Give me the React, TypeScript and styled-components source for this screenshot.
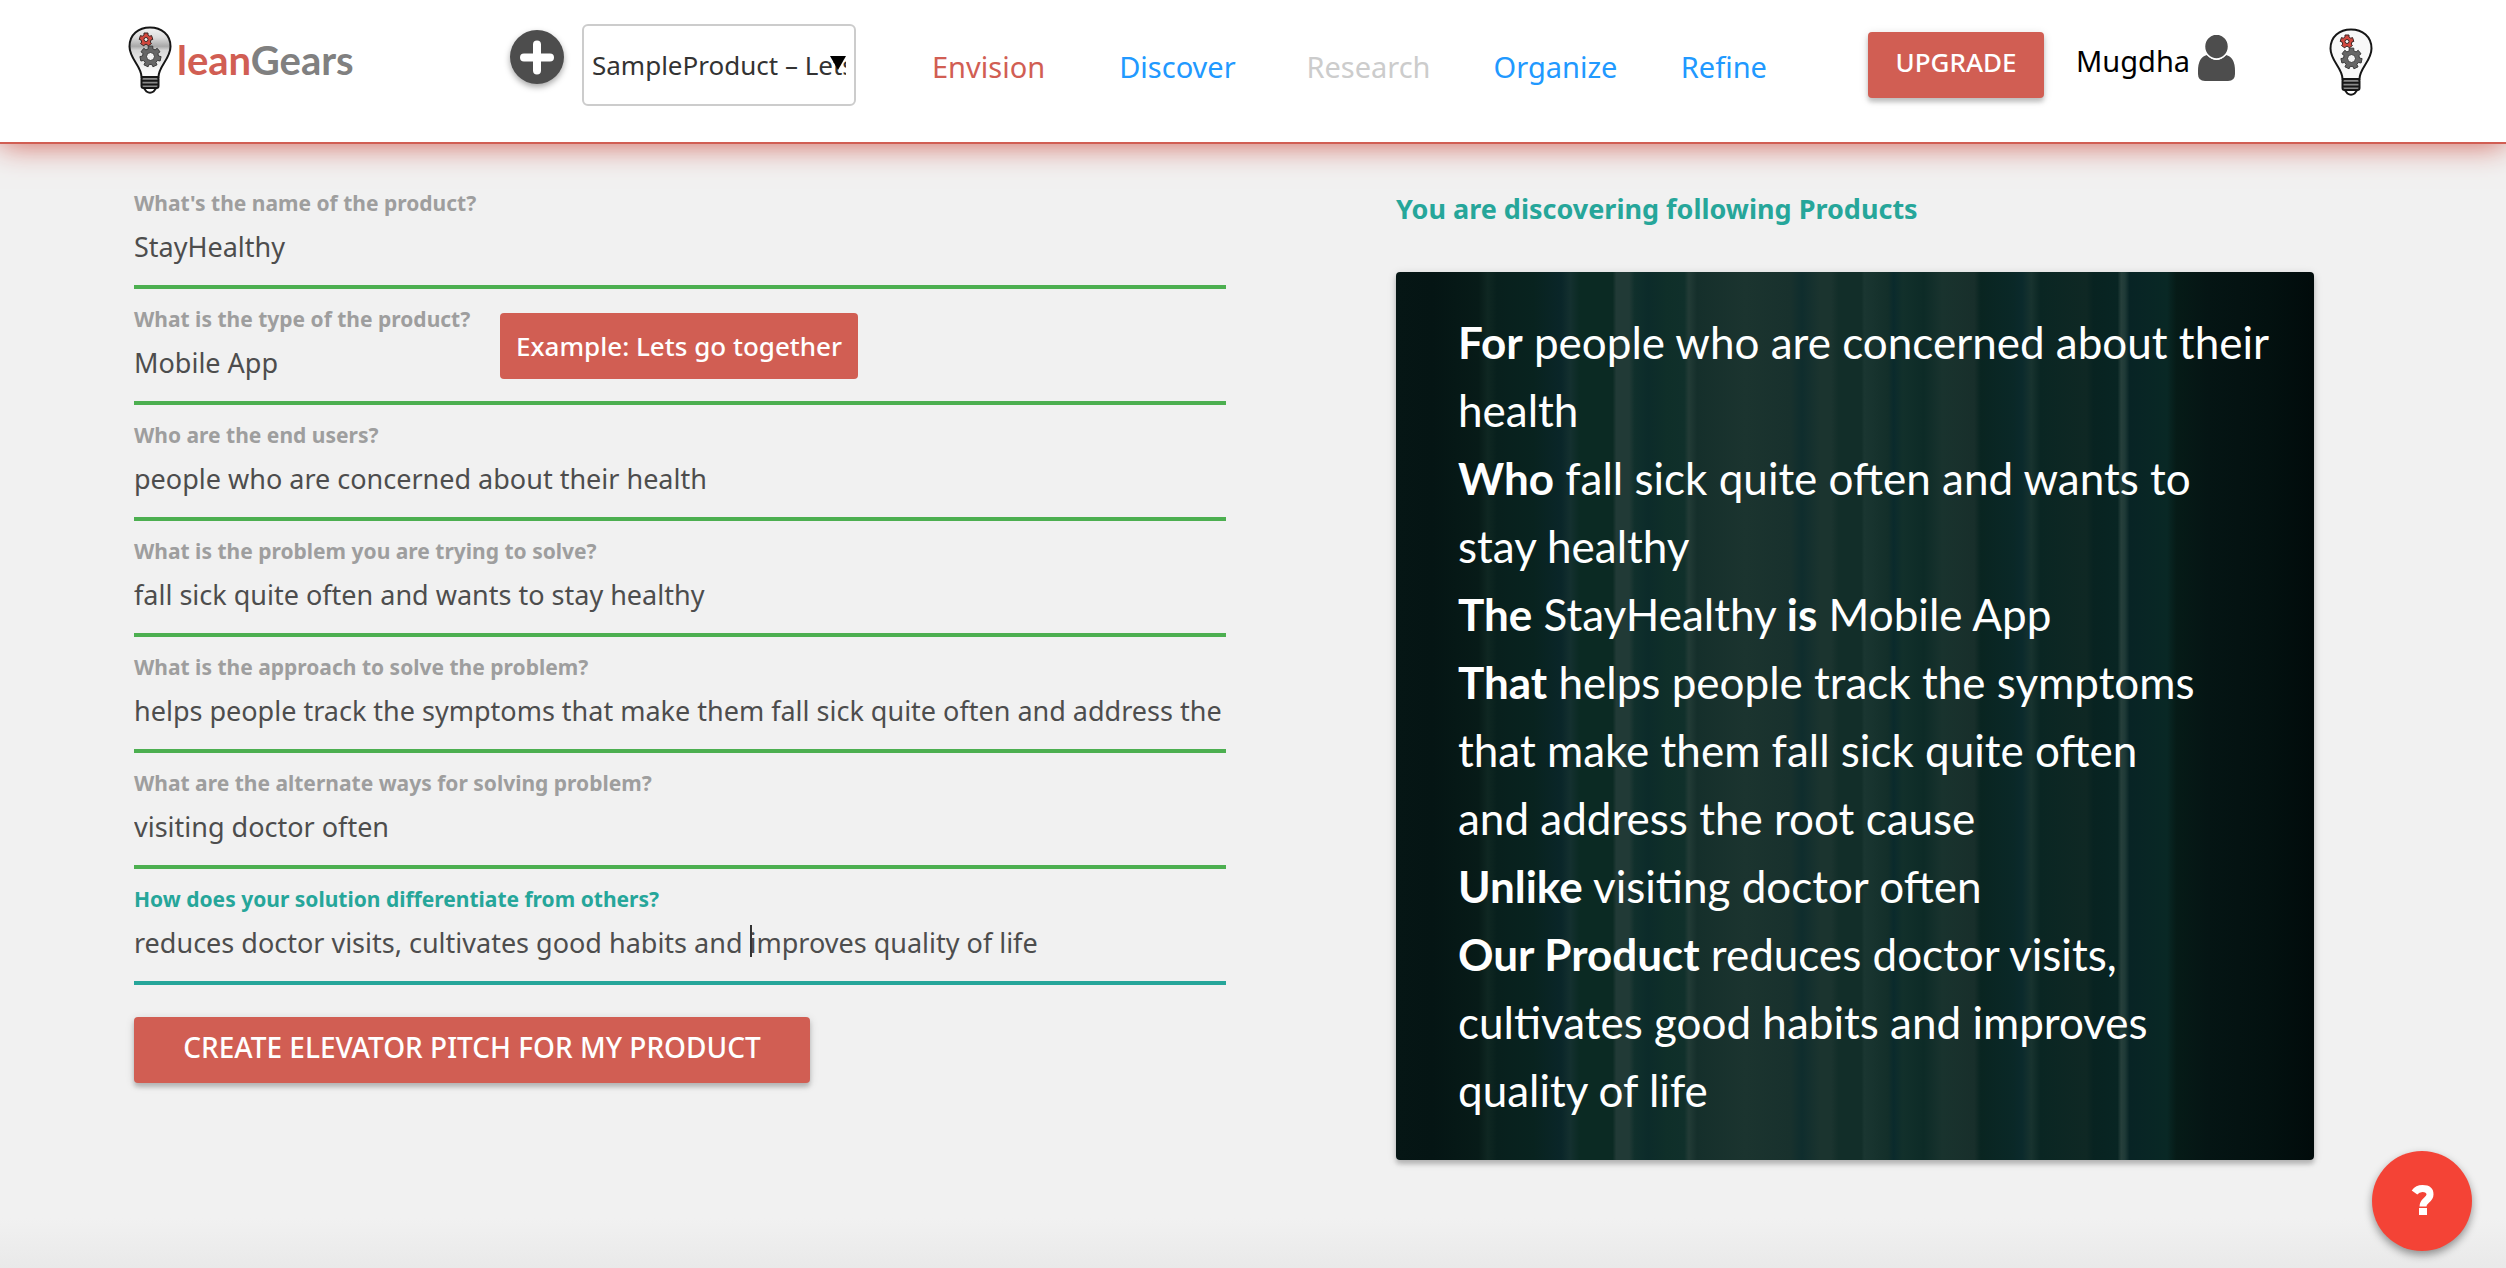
import React, { useLayoutEffect, useRef, useState } from 'react';
import styled, { createGlobalStyle, css } from 'styled-components';

const color = {
  page: '#f1f1f1',
  brand: '#d15e53',
  teal: '#26a69a',
  valid: '#4caf50',
  link: '#2199ff',
  muted: '#cccccc',
  label: '#9e9e9e',
  text: '#4d4d4d',
};

const raised = '0 4px 4px rgba(0, 0, 0, 0.18), 0 2px 10px rgba(0, 0, 0, 0.14)';
const sans = `'Noto Sans', 'Open Sans', sans-serif`;

const GlobalStyle = createGlobalStyle`
  *, *::before, *::after { box-sizing: border-box; }
  body {
    margin: 0;
    background: ${color.page};
    color: ${color.text};
    font-family: ${sans};
  }
  button, input, select { font-family: inherit; }
`;

const Page = styled.div`
  min-height: 100vh;
  background: linear-gradient(to top, #e9e9e9, ${color.page} 50px);
`;

const Header = styled.header`
  position: relative;
  display: grid;
  grid-template-columns: 382px 422px minmax(0, 1fr) 461px 44px;
  align-items: start;
  height: 144px;
  padding: 24px 133px 0 128px;
  background: #ffffff;
  border-bottom: 2px solid ${color.brand};
  box-shadow: 0 0 30px ${color.brand};
`;

const Brand = styled.a`
  display: flex;
  align-items: center;
  gap: 5px;
  padding-top: 2px;
  text-decoration: none;
`;

const Mascot = styled.div`
  padding-top: 4px;
`;

const Wordmark = styled.span<{ $accent?: boolean }>`
  font-family: Lato, sans-serif;
  font-size: 40px;
  font-weight: 700;
  line-height: 68px;
  color: ${(p) => (p.$accent ? color.brand : '#808080')};
`;

const Picker = styled.div`
  display: flex;
  gap: 18px;
`;

const AddButton = styled.button`
  width: 54px;
  height: 54px;
  margin-top: 6px;
  padding: 0;
  border: 0;
  border-radius: 50%;
  background: ${color.text};
  box-shadow: 0 3px 6px rgba(0, 0, 0, 0.35);
`;

const SelectBox = styled.div`
  position: relative;
  width: 274px;
`;

const ProductSelect = styled.select`
  appearance: none;
  display: block;
  width: 100%;
  height: 82px;
  padding: 0 8px;
  border: 2px solid ${color.muted};
  border-radius: 6px;
  background: #ffffff;
  color: #333333;
  font-size: 26px;
`;

const SelectArrow = styled.svg`
  position: absolute;
  top: 32px;
  right: 10px;
  pointer-events: none;
`;

const Nav = styled.nav`
  display: grid;
  grid-template-columns: repeat(5, 1fr);
  padding-top: 23px;
`;

const NavLink = styled.a<{ $tone: 'brand' | 'link' | 'muted' }>`
  color: ${(p) => color[p.$tone]};
  font-size: 29px;
  line-height: 40px;
  text-decoration: none;
`;

const Account = styled.div`
  display: flex;
  align-items: start;
  padding-top: 8px;
`;

const RaisedButton = styled.button<{ $wide?: boolean }>`
  height: 66px;
  min-width: ${(p) => (p.$wide ? 676 : 176)}px;
  padding: 0 24px 6px;
  border: 0;
  border-radius: 4px;
  background: ${color.brand};
  box-shadow: ${raised};
  color: #ffffff;
  font-size: ${(p) => (p.$wide ? 28 : 26)}px;
  font-weight: 500;
  line-height: 60px;
  white-space: nowrap;
`;

const UserName = styled.span`
  margin-left: 32px;
  margin-right: 8px;
  color: #000000;
  font-size: 29px;
  line-height: 58px;
`;

const UserIcon = styled.svg`
  margin-top: 3px;
`;

const Main = styled.main`
  display: grid;
  grid-template-columns: 1092fr 918fr;
  column-gap: 170px;
  align-items: start;
  padding: 29px 192px 60px 134px;
`;

const Field = styled.div`
  position: relative;
  height: 116px;
  padding-top: 16px;
`;

const Label = styled.label<{ $active?: boolean }>`
  display: block;
  color: ${(p) => (p.$active ? color.teal : color.label)};
  font-size: 21px;
  font-weight: 700;
  line-height: 28px;
`;

const TextInput = styled.input<{ $active?: boolean }>`
  display: block;
  width: 100%;
  height: 72px;
  padding: 0 0 10px;
  border: 0;
  border-bottom: 4px solid ${(p) => (p.$active ? color.teal : color.valid)};
  border-radius: 0;
  outline: 0;
  background: transparent;
  color: ${color.text};
  font-size: 27px;
  ${(p) =>
    p.$active &&
    css`
      caret-color: transparent;
    `}
`;

const Caret = styled.span`
  position: absolute;
  top: 56px;
  width: 2px;
  height: 32px;
  background: #333333;
`;

const Tooltip = styled.div`
  position: absolute;
  top: 24px;
  left: 366px;
  padding: 0 16px;
  border-radius: 4px;
  background: ${color.brand};
  color: #ffffff;
  font-size: 26px;
  font-weight: 500;
  line-height: 66px;
  white-space: nowrap;
`;

const Actions = styled.div`
  padding-top: 32px;
`;

const PanelTitle = styled.h2`
  margin: 0;
  padding-top: 16px;
  color: ${color.teal};
  font-size: 27px;
  font-weight: 700;
  line-height: 40px;
`;

const stripes: [number, string][] = [
  [0, '#061615'], [4, '#051514'], [9, '#071b18'], [10, '#0f2722'], [11, '#08201d'],
  [15, '#08231f'], [18, '#0a2629'], [19, '#14302f'], [20, '#0b2a23'], [23.6, '#0b2a23'],
  [24, '#213a36'], [25.4, '#213a36'], [26, '#10302c'], [27.5, '#0c2b2a'], [29.5, '#0f2f29'],
  [31.4, '#10302b'], [31.9, '#223b36'], [32.8, '#152f2b'], [38, '#1b342f'], [43, '#18312d'],
  [44.2, '#0f2d2d'], [46.2, '#1b342f'], [47.4, '#1b342f'], [48.2, '#122e29'], [50.7, '#122e29'],
  [51, '#1a3631'], [53.6, '#132f2a'], [54.2, '#0a2a2c'], [55.2, '#12302b'], [57.5, '#0d2b27'],
  [59.5, '#19332e'], [63, '#182f2b'], [63.7, '#092521'], [67.2, '#0a2827'], [68.2, '#0b2a2c'],
  [69.2, '#18332f'], [70.2, '#0a2623'], [75.2, '#0f2824'], [76, '#082321'], [78.6, '#082523'],
  [79, '#263f3b'], [79.4, '#1f3a37'], [79.9, '#082425'], [84, '#092825'], [85, '#061b17'],
  [88.5, '#051514'], [95, '#031110'], [100, '#010b0b'],
];

const PitchCard = styled.section`
  margin-top: 43px;
  padding: 36px 24px 36px 62px;
  border-radius: 4px;
  background: linear-gradient(to right, ${stripes.map(([at, c]) => `${c} ${at}%`).join(', ')});
  box-shadow: ${raised};
  color: #ffffff;
  font-family: Lato, sans-serif;
  font-size: 44px;
`;

const PitchLine = styled.div`
  line-height: 68px;
  white-space: nowrap;
`;

const HelpButton = styled.button`
  position: fixed;
  right: 34px;
  bottom: 17px;
  width: 100px;
  height: 100px;
  padding: 0;
  border: 0;
  border-radius: 50%;
  background: #f44336;
  box-shadow: 0 4px 8px rgba(0, 0, 0, 0.4);
`;

function gearPath(cx: number, cy: number, outer: number, inner: number, teeth: number) {
  const points: string[] = [];
  for (let i = 0; i < teeth; i += 1) {
    const base = (i / teeth) * Math.PI * 2 - Math.PI / 2;
    const step = (Math.PI * 2) / teeth;
    [[-0.24, outer], [0.24, outer], [0.32, inner], [0.68, inner]].forEach(([offset, radius]) => {
      const angle = base + offset * step;
      points.push(`${(cx + Math.cos(angle) * radius).toFixed(2)} ${(cy + Math.sin(angle) * radius).toFixed(2)}`);
    });
  }
  return `M${points.join('L')}Z`;
}

function Bulb({ shaded }: { shaded?: boolean }) {
  return (
    <svg width="44" height="68" viewBox="0 0 44 68" aria-hidden="true">
      <defs>
        <linearGradient id="glass" x1="0" y1="0" x2="0" y2="1">
          <stop offset="0" stopColor="#f4f4f4" />
          <stop offset="0.2" stopColor="#dcdcdc" />
          <stop offset="0.38" stopColor="#a8a8a8" />
          <stop offset="0.46" stopColor="#d6d6d6" />
          <stop offset="0.9" stopColor="#fafafa" />
        </linearGradient>
      </defs>
      <path d="M15 61L18.500 65.500Q22 68 25.500 65.500L29 61Z" fill="#ffffff" stroke="#161616" strokeWidth="2" />
      <path
        d="M13.500 51C13.500 40 1.500 33 1.500 20.500C1.500 8.500 10.500 1.500 22 1.500S42.500 8.500 42.500 20.500C42.500 33 30.500 40 30.500 51Z"
        fill={shaded ? 'url(#glass)' : '#f8f8f8'}
        stroke="#161616"
        strokeWidth="2"
      />
      <rect x="13.500" y="51" width="17" height="11" rx="2" fill="#8a8a8a" stroke="#161616" strokeWidth="2" />
      <path d="M14 54.700H30M14 58.400H30" stroke="#161616" strokeWidth="2" />
      <path d={gearPath(18, 13.5, 6.8, 5, 5)} fill="#d2483e" stroke="#3a2523" strokeWidth="1" strokeLinejoin="round" />
      <circle cx="18" cy="13.500" r="2" fill="#f4f4f4" stroke="#3a2523" strokeWidth="1" />
      <path d={gearPath(22.5, 30.5, 10.6, 8, 7)} fill="#666666" stroke="#3a3a3a" strokeWidth="1" strokeLinejoin="round" />
      <circle cx="22.500" cy="30.500" r="4" fill="#f2f2f2" stroke="#3a3a3a" strokeWidth="1" />
    </svg>
  );
}

const navItems: { text: string; tone: 'brand' | 'link' | 'muted' }[] = [
  { text: 'Envision', tone: 'brand' },
  { text: 'Discover', tone: 'link' },
  { text: 'Research', tone: 'muted' },
  { text: 'Organize', tone: 'link' },
  { text: 'Refine', tone: 'link' },
];

interface Question {
  id: string;
  label: string;
  value: string;
  tip?: string;
  caretAfter?: string;
}

const questions: Question[] = [
  { id: 'name', label: "What's the name of the product?", value: 'StayHealthy' },
  { id: 'type', label: 'What is the type of the product?', value: 'Mobile App', tip: 'Example: Lets go together' },
  { id: 'users', label: 'Who are the end users?', value: 'people who are concerned about their health' },
  { id: 'problem', label: 'What is the problem you are trying to solve?', value: 'fall sick quite often and wants to stay healthy' },
  {
    id: 'approach',
    label: 'What is the approach to solve the problem?',
    value: 'helps people track the symptoms that make them fall sick quite often and address the',
  },
  { id: 'alternatives', label: 'What are the alternate ways for solving problem?', value: 'visiting doctor often' },
  {
    id: 'difference',
    label: 'How does your solution differentiate from others?',
    value: 'reduces doctor visits, cultivates good habits and improves quality of life',
    caretAfter: 'reduces doctor visits, cultivates good habits and ',
  },
];

const pitch: React.ReactNode[] = [
  <><b>For</b> people who are concerned about their</>,
  <>health</>,
  <><b>Who</b> fall sick quite often and wants to</>,
  <>stay healthy</>,
  <><b>The</b> StayHealthy <b>is</b> Mobile App</>,
  <><b>That</b> helps people track the symptoms</>,
  <>that make them fall sick quite often</>,
  <>and address the root cause</>,
  <><b>Unlike</b> visiting doctor often</>,
  <><b>Our Product</b> reduces doctor visits,</>,
  <>cultivates good habits and improves</>,
  <>quality of life</>,
];

function QuestionField({ question }: { question: Question }) {
  const inputRef = useRef<HTMLInputElement>(null);
  const [caretLeft, setCaretLeft] = useState(0);
  const active = question.caretAfter !== undefined;

  useLayoutEffect(() => {
    const context = document.createElement('canvas').getContext('2d');
    if (!context || !inputRef.current || !question.caretAfter) return;
    const style = getComputedStyle(inputRef.current);
    context.font = `${style.fontWeight} ${style.fontSize} ${style.fontFamily}`;
    setCaretLeft(Math.round(context.measureText(question.caretAfter).width));
  }, [question.caretAfter]);

  return (
    <Field>
      <Label htmlFor={question.id} $active={active}>{question.label}</Label>
      <TextInput ref={inputRef} id={question.id} type="text" defaultValue={question.value} $active={active} />
      {active && <Caret style={{ left: caretLeft }} />}
      {question.tip && <Tooltip role="tooltip">{question.tip}</Tooltip>}
    </Field>
  );
}

export default function App() {
  return (
    <Page>
      <GlobalStyle />
      <Header>
        <Brand href="#home">
          <Bulb shaded />
          <span>
            <Wordmark $accent>lean</Wordmark>
            <Wordmark>Gears</Wordmark>
          </span>
        </Brand>
        <Picker>
          <AddButton type="button" aria-label="Add product">
            <svg width="54" height="54" viewBox="0 0 54 54" aria-hidden="true">
              <path d="M27 14.500V40.500M14 27.500H40" stroke="#ffffff" strokeWidth="8" strokeLinecap="round" />
            </svg>
          </AddButton>
          <SelectBox>
            <ProductSelect aria-label="Product" defaultValue="sample">
              <option value="sample">SampleProduct – Lets go together</option>
            </ProductSelect>
            <SelectArrow width="16" height="14" viewBox="0 0 16 14" aria-hidden="true">
              <path d="M0 0H16L8 14Z" fill="#000000" />
            </SelectArrow>
          </SelectBox>
        </Picker>
        <Nav>
          {navItems.map((item) => (
            <NavLink key={item.text} href={`#${item.text.toLowerCase()}`} $tone={item.tone}>{item.text}</NavLink>
          ))}
        </Nav>
        <Account>
          <RaisedButton type="button">UPGRADE</RaisedButton>
          <UserName>Mugdha</UserName>
          <UserIcon width="37" height="46" viewBox="0 0 37 46" aria-hidden="true">
            <path d="M9 20Q18.500 30 28 20Q37 22 37 36V39Q37 46 30 46H7Q0 46 0 39V36Q0 22 9 20Z" fill={color.text} />
            <ellipse cx="18.500" cy="11.500" rx="12" ry="12.500" fill={color.text} stroke="#ffffff" strokeWidth="1.500" />
          </UserIcon>
        </Account>
        <Mascot>
          <Bulb />
        </Mascot>
      </Header>
      <Main>
        <form>
          {questions.map((question) => (
            <QuestionField key={question.id} question={question} />
          ))}
          <Actions>
            <RaisedButton type="button" $wide>CREATE ELEVATOR PITCH FOR MY PRODUCT</RaisedButton>
          </Actions>
        </form>
        <div>
          <PanelTitle>You are discovering following Products</PanelTitle>
          <PitchCard>
            {pitch.map((line, index) => (
              <PitchLine key={index}>{line}</PitchLine>
            ))}
          </PitchCard>
        </div>
      </Main>
      <HelpButton type="button" aria-label="Help">
        <svg width="100" height="100" viewBox="0 0 100 100" aria-hidden="true">
          <path d="M42.500 41.500Q45.500 37.500 50.500 37.500Q58 37.500 58 43.500C58 49 51 49.500 51 55.500" fill="none" stroke="#ffffff" strokeWidth="7" />
          <rect x="47" y="57" width="8" height="7" fill="#ffffff" />
        </svg>
      </HelpButton>
    </Page>
  );
}
